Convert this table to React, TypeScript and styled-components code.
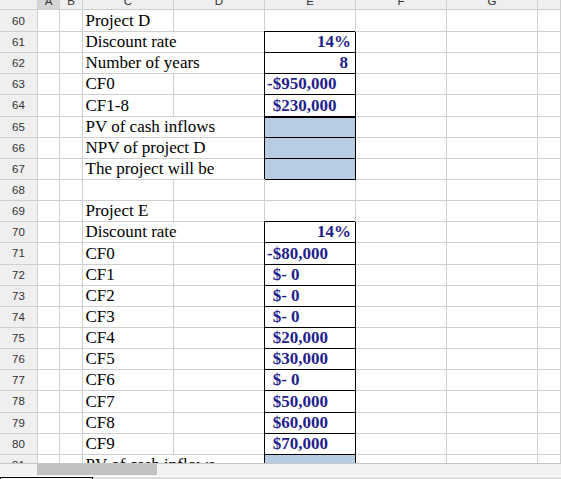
import React from "react";
import styled, { createGlobalStyle } from "styled-components";

const GRID = "#cfcfcf";
const HEAD_BG = "#efefef";
const NAVY = "#1f1f8c";
const FILL = "#b8cce4";
const COLUMNS = "38px 22px 23px 91px 91px 91px 91px 91px 1fr";

const Global = createGlobalStyle`
  html, body { margin: 0; padding: 0; background: #fff; overflow: hidden; }
  #root { height: 479px; }
`;

const Window = styled.div`
  width: 561px;
  height: 479px;
  display: flex;
  flex-direction: column;
  overflow: hidden;
  background: #fff;
`;

const Sheet = styled.div`
  height: 463px;
  flex: none;
  overflow: hidden;
`;

const HeaderRow = styled.div`
  display: grid;
  grid-template-columns: ${COLUMNS};
  height: 10px;
`;

const ColHead = styled.div<{ $selected?: boolean }>`
  box-sizing: border-box;
  background: ${(p) => (p.$selected ? "#d5d5d5" : HEAD_BG)};
  border-right: 1px solid ${GRID};
  border-bottom: 1px solid ${GRID};
  display: flex;
  align-items: flex-end;
  justify-content: center;
  overflow: hidden;
  padding-bottom: 2px;
  font-family: "Liberation Sans", Arial, sans-serif;
  font-size: 11.5px;
  line-height: 12px;
  color: #333;
`;

const Row = styled.div<{ $first?: boolean }>`
  display: grid;
  grid-template-columns: ${COLUMNS};
  height: ${(p) => (p.$first ? "22px" : "21.15px")};
`;

const RowHead = styled.div`
  box-sizing: border-box;
  background: ${HEAD_BG};
  border-right: 1px solid ${GRID};
  border-bottom: 1px solid ${GRID};
  display: flex;
  align-items: center;
  justify-content: center;
  font-family: "Liberation Sans", Arial, sans-serif;
  font-size: 11.5px;
  color: #333;
`;

const Cell = styled.div`
  box-sizing: border-box;
  border-right: 1px solid ${GRID};
  border-bottom: 1px solid ${GRID};
  background: #fff;
`;

const Label = styled.div<{ $span?: boolean }>`
  box-sizing: border-box;
  grid-column: ${(p) => (p.$span ? "span 2" : "span 1")};
  border-right: 1px solid ${GRID};
  border-bottom: 1px solid ${GRID};
  background: #fff;
  display: flex;
  align-items: flex-end;
  padding-left: 2.5px;
  white-space: nowrap;
  overflow: hidden;
  font-family: "Liberation Serif", "Times New Roman", serif;
  font-size: 17px;
  color: #000;
`;

const Value = styled.div<{
  $boxed?: boolean;
  $fill?: boolean;
  $right?: boolean;
  $pos?: boolean;
  $thickTop?: boolean;
  $extraRight?: boolean;
}>`
  box-sizing: border-box;
  background: ${(p) => (p.$fill ? FILL : "#fff")};
  border-right: 1px solid ${(p) => (p.$boxed ? "#000" : GRID)};
  border-bottom: 1px solid ${(p) => (p.$boxed ? "#000" : GRID)};
  border-top: ${(p) => (p.$thickTop ? "1px solid #000" : "none")};
  box-shadow: ${(p) => (p.$boxed ? "-1px -1px 0 0 #000" : "none")};
  display: flex;
  align-items: flex-end;
  justify-content: ${(p) => (p.$right ? "flex-end" : "flex-start")};
  padding-left: ${(p) => (p.$pos ? "7.7px" : "2px")};
  padding-right: ${(p) => (p.$extraRight ? "7px" : "4px")};
  white-space: pre;
  font-family: "Liberation Serif", "Times New Roman", serif;
  font-weight: bold;
  font-size: 17px;
  color: ${NAVY};
`;

const ScrollBar = styled.div`
  flex: none;
  height: 13px;
  box-sizing: border-box;
  border-top: 1px solid #c6c6c6;
  background: #f2f2f2;
  padding-left: 37px;
`;

const Thumb = styled.div`
  width: 120px;
  height: 11px;
  background: #c2c2c2;
`;

const TabBar = styled.div`
  flex: none;
  height: 24px;
  margin-top: 1px;
  background: #dedede;
  display: flex;
`;

const Tab = styled.div`
  width: 93px;
  box-sizing: border-box;
  border: 1px solid #000;
  background: #fff;
`;

type V = {
  text?: string;
  right?: boolean;
  pos?: boolean;
  fill?: boolean;
  thickTop?: boolean;
  extraRight?: boolean;
};

type R = { n: number; label?: string; span?: boolean; value?: V };

const rows: R[] = [
  { n: 60, label: "Project D" },
  { n: 61, label: "Discount rate", span: true, value: { text: "14%", right: true } },
  { n: 62, label: "Number of years", span: true, value: { text: "8", right: true, extraRight: true } },
  { n: 63, label: "CF0", value: { text: "-$950,000" } },
  { n: 64, label: "CF1-8", value: { text: "$230,000", pos: true } },
  { n: 65, label: "PV of cash inflows", span: true, value: { fill: true, thickTop: true } },
  { n: 66, label: "NPV of project D", span: true, value: { fill: true } },
  { n: 67, label: "The project will be", span: true, value: { fill: true } },
  { n: 68 },
  { n: 69, label: "Project E" },
  { n: 70, label: "Discount rate", span: true, value: { text: "14%", right: true } },
  { n: 71, label: "CF0", value: { text: "-$80,000" } },
  { n: 72, label: "CF1", value: { text: "$- 0", pos: true } },
  { n: 73, label: "CF2", value: { text: "$- 0", pos: true } },
  { n: 74, label: "CF3", value: { text: "$- 0", pos: true } },
  { n: 75, label: "CF4", value: { text: "$20,000", pos: true } },
  { n: 76, label: "CF5", value: { text: "$30,000", pos: true } },
  { n: 77, label: "CF6", value: { text: "$- 0", pos: true } },
  { n: 78, label: "CF7", value: { text: "$50,000", pos: true } },
  { n: 79, label: "CF8", value: { text: "$60,000", pos: true } },
  { n: 80, label: "CF9", value: { text: "$70,000", pos: true } },
  { n: 81, label: "PV of cash inflows", span: true, value: { fill: true } },
];

const letters = ["A", "B", "C", "D", "E", "F", "G", "H"];

export default function App() {
  return (
    <Window>
      <Global />
      <Sheet>
        <HeaderRow>
          <ColHead />
          {letters.map((l) => (
            <ColHead key={l} $selected={l === "A"}>
              {l === "H" ? "" : l}
            </ColHead>
          ))}
        </HeaderRow>
        {rows.map((r, i) => (
          <Row key={r.n} $first={i === 0}>
            <RowHead>{r.n}</RowHead>
            <Cell />
            <Cell />
            <Label $span={r.span}>{r.label ?? ""}</Label>
            {!r.span && <Cell />}
            <Value
              $boxed={!!r.value}
              $fill={r.value?.fill}
              $right={r.value?.right}
              $pos={r.value?.pos}
              $thickTop={r.value?.thickTop}
              $extraRight={r.value?.extraRight}
            >
              {r.value?.text ?? ""}
            </Value>
            <Cell />
            <Cell />
            <Cell />
          </Row>
        ))}
      </Sheet>
      <ScrollBar>
        <Thumb />
      </ScrollBar>
      <TabBar>
        <Tab />
      </TabBar>
    </Window>
  );
}
